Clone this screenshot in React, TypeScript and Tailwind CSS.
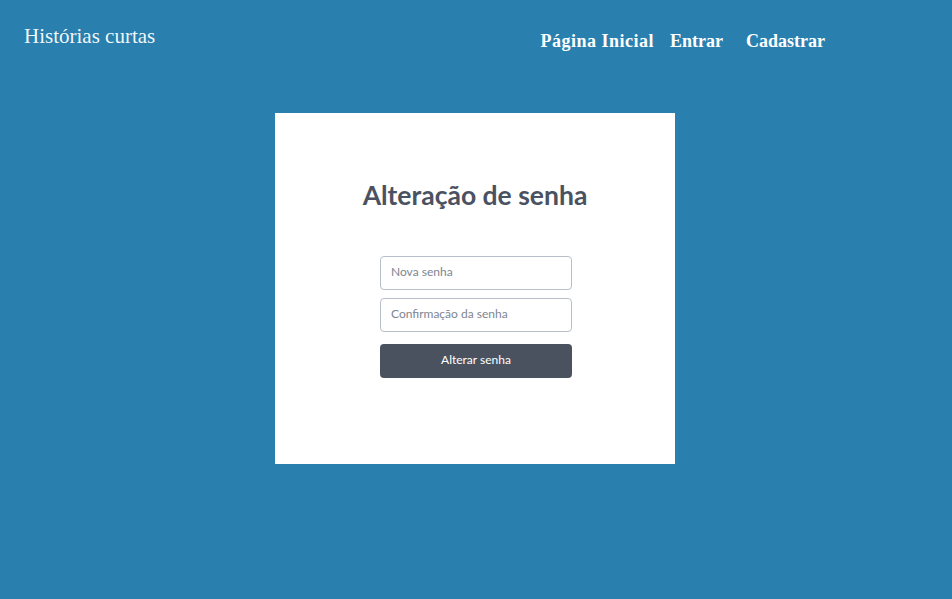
import React from "react";

function Header() {
  return (
    <header className="flex items-start justify-between h-[113px]">
      <h1
        className="ml-6 mt-[24px] text-[21px] text-white/95 leading-6"
        style={{ fontFamily: '"Liberation Serif", serif' }}
      >
        Histórias curtas
      </h1>
      <nav
        className="mr-[127px] mt-[29px] flex items-center text-[18px] font-bold text-white leading-6"
        style={{ fontFamily: '"Liberation Serif", serif' }}
      >
        <a href="#" className="mr-4 tracking-[0.5px]">Página Inicial</a>
        <a href="#" className="mr-[23px]">Entrar</a>
        <a href="#">Cadastrar</a>
      </nav>
    </header>
  );
}

export default function App() {
  return (
    <div className="min-h-[599px] bg-[#2980ae]" style={{ fontFamily: "Lato, sans-serif" }}>
      <Header />
      <main className="w-[400px] h-[351px] mx-auto -translate-x-px bg-white flex flex-col items-center">
        <h2 className="mt-[66px] text-[26.5px] font-bold text-[#4a5261] leading-8">Alteração de senha</h2>
        <form className="mt-[45px] w-[192px] translate-x-px flex flex-col">
          <input
            type="password"
            placeholder="Nova senha"
            className="h-[34px] rounded border border-[#b9bfca] px-[10px] pb-[3px] text-[12px] placeholder:text-[#7d8593] outline-none"
          />
          <input
            type="password"
            placeholder="Confirmação da senha"
            className="mt-2 h-[34px] rounded border border-[#b9bfca] px-[10px] pb-[3px] text-[12px] placeholder:text-[#7d8593] outline-none"
          />
          <button
            type="button"
            className="mt-3 h-[34px] rounded bg-[#4a5260] pb-[2px] text-white text-[12px]"
          >
            Alterar senha
          </button>
        </form>
      </main>
    </div>
  );
}
